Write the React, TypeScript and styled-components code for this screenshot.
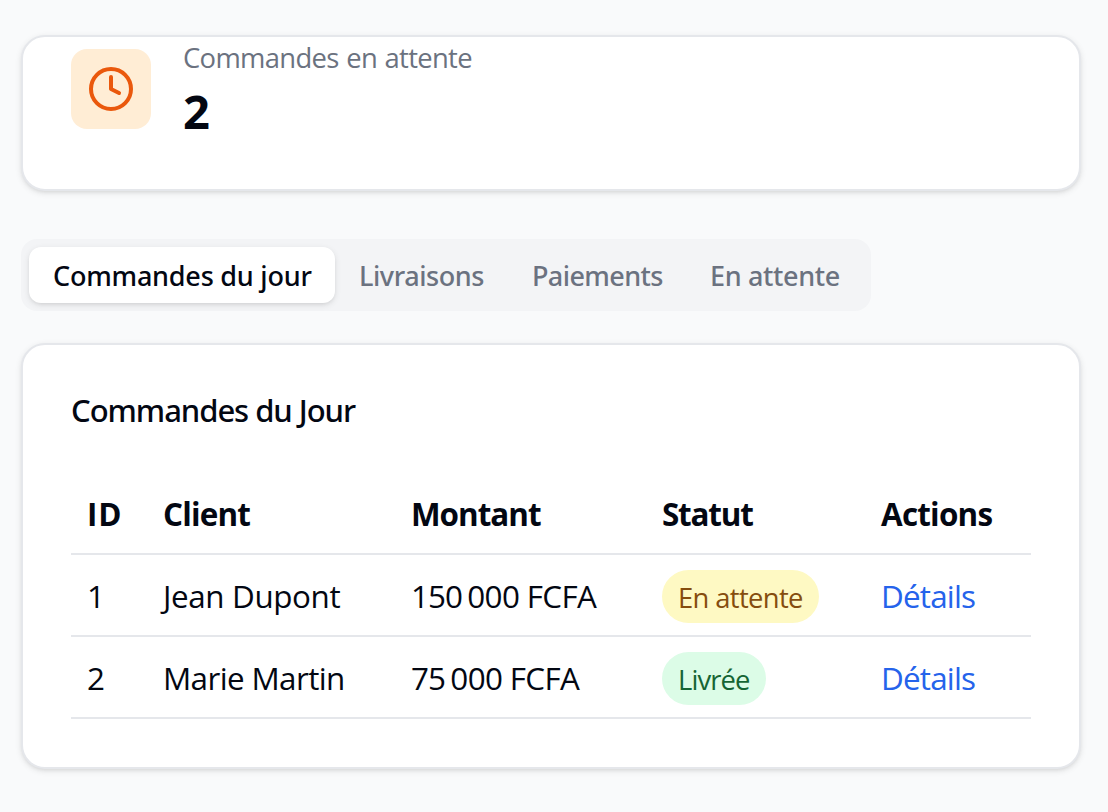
import React, { useState } from "react";
import styled, { createGlobalStyle } from "styled-components";
import { Clock } from "lucide-react";

const GlobalStyle = createGlobalStyle`
  *, *::before, *::after { box-sizing: border-box; }
  body {
    margin: 0;
    background: #f9fafb;
    color: #030712;
    font-family: "Open Sans", "Noto Sans", sans-serif;
  }
`;

const Page = styled.main`
  display: flex;
  flex-direction: column;
  align-items: flex-start;
  min-height: 812px;
  padding: 35px 27px 0 21px;
  background: #f9fafb;
`;

const Card = styled.section`
  width: 100%;
  background: #fff;
  border: 2px solid #e5e7eb;
  border-radius: 24px;
  box-shadow: 0 2px 6px rgba(0, 0, 0, 0.1), 0 2px 4px -2px rgba(0, 0, 0, 0.1);
`;

const StatCard = styled(Card)`
  display: flex;
  align-items: center;
  gap: 32px;
  height: 156px;
  padding: 0 48px 48px;
`;

const IconTile = styled.div`
  display: flex;
  align-items: center;
  justify-content: center;
  width: 80px;
  height: 80px;
  border-radius: 16px;
  background: #ffedd5;
  color: #ea580c;
`;

const StatLabel = styled.p`
  margin: 0;
  padding-top: 2px;
  font-size: 27.4px;
  line-height: 38px;
  letter-spacing: -0.66px;
  word-spacing: 1px;
  color: #6b7280;
`;

const StatValue = styled.p`
  margin: 0;
  padding-top: 4px;
  font-size: 47px;
  font-weight: 700;
  line-height: 60px;
`;

const TabList = styled.div`
  display: flex;
  height: 72px;
  margin: 48px 0 32px;
  padding: 8px;
  border-radius: 16px;
  background: #f3f4f6;
`;

const Tab = styled.button<{ $active: boolean; $width: number; $tracking: number }>`
  width: ${(p) => p.$width}px;
  height: 56px;
  padding: 10px 0 8px 24px;
  border: 0;
  border-radius: 12px;
  background: ${(p) => (p.$active ? "#fff" : "transparent")};
  box-shadow: ${(p) =>
    p.$active ? "0 2px 6px rgba(0, 0, 0, 0.1), 0 2px 4px -2px rgba(0, 0, 0, 0.1)" : "none"};
  color: ${(p) => (p.$active ? "#030712" : "#6b7280")};
  font-family: "Noto Sans", sans-serif;
  font-size: 27px;
  font-weight: 500;
  line-height: 38px;
  letter-spacing: ${(p) => p.$tracking}px;
  text-align: left;
  white-space: nowrap;
  cursor: pointer;
`;

const OrdersCard = styled(Card)`
  height: 426px;
  padding: 48px;
`;

const CardTitle = styled.h3`
  margin: 0 0 48px;
  padding-top: 2px;
  font-family: "Noto Sans", sans-serif;
  font-size: 31px;
  font-weight: 500;
  line-height: 30px;
  letter-spacing: -1.05px;
`;

const Table = styled.table`
  width: 960px;
  table-layout: fixed;
  border-collapse: separate;
  border-spacing: 0;
  font-size: 31.4px;
  line-height: 46px;
`;

const Column = styled.col<{ $width: number }>`
  width: ${(p) => p.$width}px;
`;

const HeadCell = styled.th<{ $tracking: number }>`
  height: 82px;
  padding: 18px 0 16px 16px;
  border-bottom: 2px solid #e5e7eb;
  font-weight: 700;
  letter-spacing: ${(p) => p.$tracking}px;
  text-align: left;
`;

const Cell = styled.td`
  height: 82px;
  padding: 18px 0 16px 16px;
  border-bottom: 2px solid #e5e7eb;
  letter-spacing: -0.65px;
  vertical-align: top;
  white-space: nowrap;
`;

const NameCell = styled(Cell)<{ $tracking: number }>`
  letter-spacing: ${(p) => p.$tracking}px;
`;

const Digits = styled.span`
  margin-right: 2px;
  letter-spacing: -1px;
`;

const BadgeCell = styled(Cell)`
  padding: 15px 0 0 16px;
`;

const Badge = styled.span<{ $pending: boolean }>`
  display: block;
  width: ${(p) => (p.$pending ? 157 : 104)}px;
  height: 53px;
  padding: 8px 0 0 16px;
  border-radius: 27px;
  background: ${(p) => (p.$pending ? "#fef9c3" : "#dcfce7")};
  color: ${(p) => (p.$pending ? "#854d0e" : "#166534")};
  font-size: 27.4px;
  line-height: 40px;
  letter-spacing: ${(p) => (p.$pending ? -0.64 : -0.9)}px;
`;

const DetailsLink = styled.a`
  color: #2563eb;
  letter-spacing: -0.8px;
  cursor: pointer;
`;

const tabs = [
  { label: "Commandes du jour", width: 306, tracking: -0.22 },
  { label: "Livraisons", width: 173, tracking: -0.42 },
  { label: "Paiements", width: 178, tracking: -0.6 },
  { label: "En attente", width: 177, tracking: -0.35 },
];

const columns = [
  { label: "ID", width: 76, tracking: 0.8 },
  { label: "Client", width: 248, tracking: -0.8 },
  { label: "Montant", width: 251, tracking: -1 },
  { label: "Statut", width: 219, tracking: -1.2 },
  { label: "Actions", width: 166, tracking: -0.77 },
];

const orders = [
  { id: 1, client: "Jean Dupont", tracking: -0.38, amount: ["150", "000"], status: "En attente" },
  { id: 2, client: "Marie Martin", tracking: -0.62, amount: ["75", "000"], status: "Livrée" },
];

export default function App() {
  const [active, setActive] = useState(0);
  return (
    <>
      <GlobalStyle />
      <Page>
        <StatCard>
          <IconTile>
            <Clock size={48} strokeWidth={2} />
          </IconTile>
          <div>
            <StatLabel>Commandes en attente</StatLabel>
            <StatValue>2</StatValue>
          </div>
        </StatCard>

        <TabList role="tablist">
          {tabs.map((tab, i) => (
            <Tab
              key={tab.label}
              role="tab"
              aria-selected={i === active}
              $active={i === active}
              $width={tab.width}
              $tracking={tab.tracking}
              onClick={() => setActive(i)}
            >
              {tab.label}
            </Tab>
          ))}
        </TabList>

        <OrdersCard>
          <CardTitle>Commandes du Jour</CardTitle>
          <Table>
            <colgroup>
              {columns.map((c) => (
                <Column key={c.label} $width={c.width} />
              ))}
            </colgroup>
            <thead>
              <tr>
                {columns.map((c) => (
                  <HeadCell key={c.label} $tracking={c.tracking}>
                    {c.label}
                  </HeadCell>
                ))}
              </tr>
            </thead>
            <tbody>
              {orders.map((o) => (
                <tr key={o.id}>
                  <Cell>{o.id}</Cell>
                  <NameCell $tracking={o.tracking}>{o.client}</NameCell>
                  <Cell>
                    <Digits>{o.amount[0]}</Digits>
                    {"\u202f"}
                    {o.amount[1]} FCFA
                  </Cell>
                  <BadgeCell>
                    <Badge $pending={o.status === "En attente"}>{o.status}</Badge>
                  </BadgeCell>
                  <Cell>
                    <DetailsLink>Détails</DetailsLink>
                  </Cell>
                </tr>
              ))}
            </tbody>
          </Table>
        </OrdersCard>
      </Page>
    </>
  );
}
